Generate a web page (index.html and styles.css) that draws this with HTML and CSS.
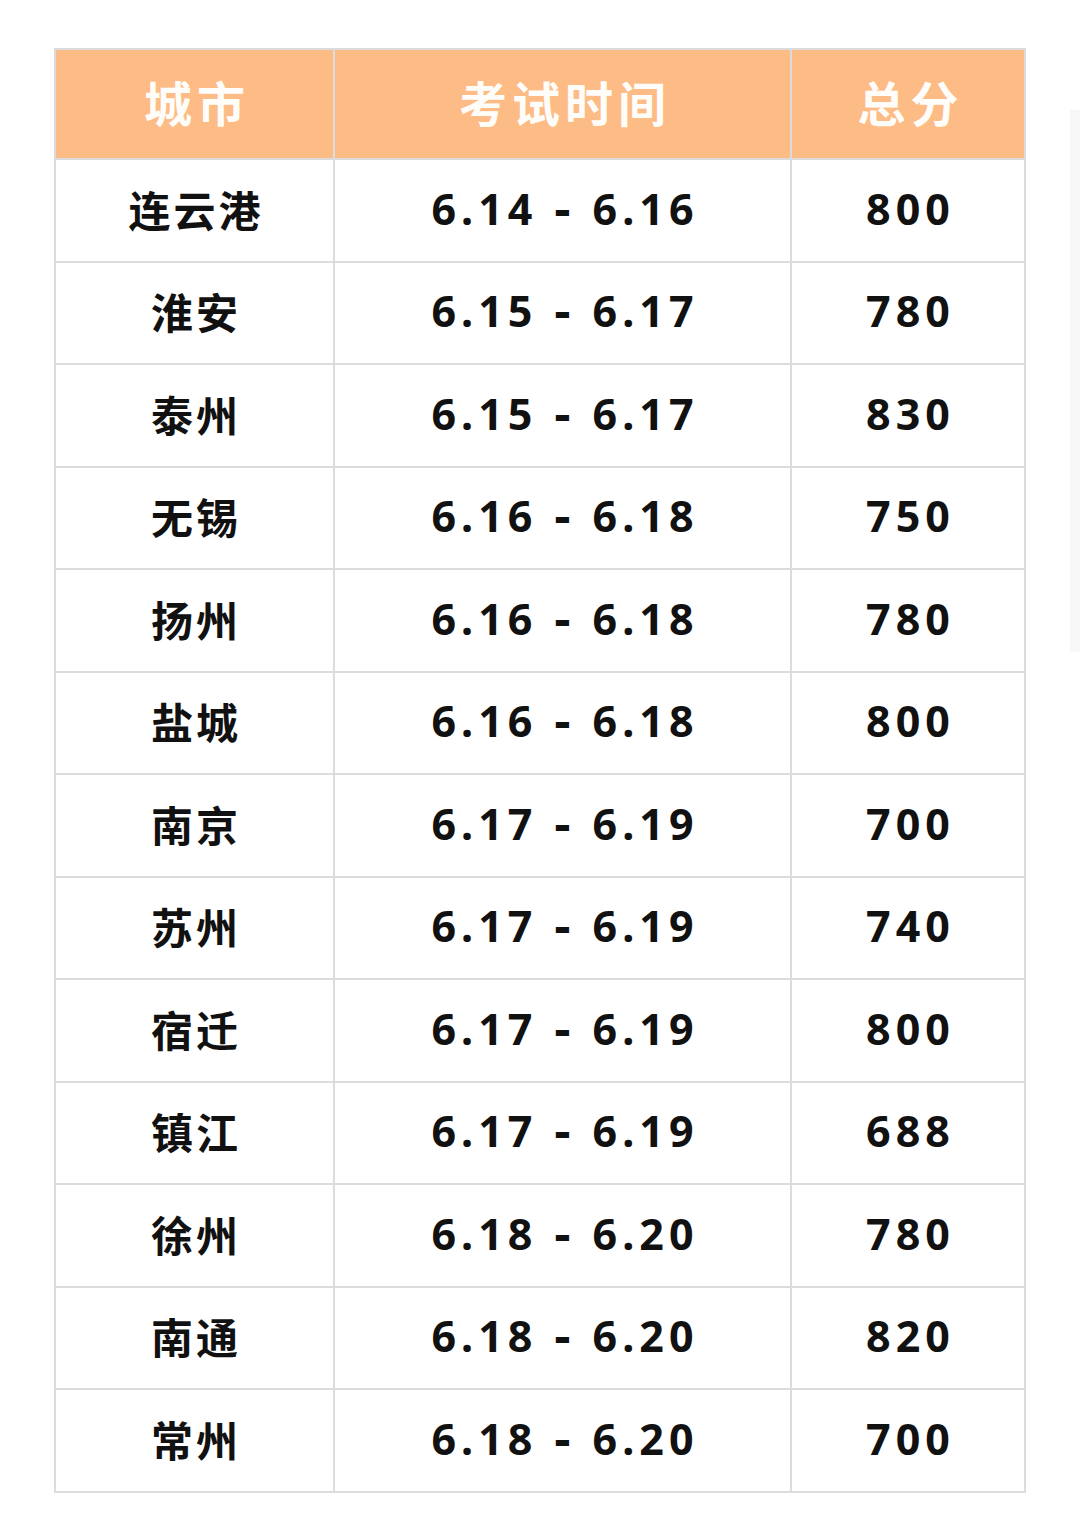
FILE: index.html
```html
<!DOCTYPE html>
<html lang="zh-CN">
<head>
<meta charset="utf-8">
<title>考试时间</title>
<link rel="stylesheet" href="styles.css">
</head>
<body>
<div class="page">
  <table class="exam">
    <colgroup>
      <col class="c-city">
      <col class="c-time">
      <col class="c-score">
    </colgroup>
    <thead>
      <tr><th>城市</th><th>考试时间</th><th>总分</th></tr>
    </thead>
    <tbody>
      <tr><td class="city">连云港</td><td class="num">6.14 <span class="dash">-</span> 6.16</td><td class="num">800</td></tr>
      <tr><td class="city">淮安</td><td class="num">6.15 <span class="dash">-</span> 6.17</td><td class="num">780</td></tr>
      <tr><td class="city">泰州</td><td class="num">6.15 <span class="dash">-</span> 6.17</td><td class="num">830</td></tr>
      <tr><td class="city">无锡</td><td class="num">6.16 <span class="dash">-</span> 6.18</td><td class="num">750</td></tr>
      <tr><td class="city">扬州</td><td class="num">6.16 <span class="dash">-</span> 6.18</td><td class="num">780</td></tr>
      <tr><td class="city">盐城</td><td class="num">6.16 <span class="dash">-</span> 6.18</td><td class="num">800</td></tr>
      <tr><td class="city">南京</td><td class="num">6.17 <span class="dash">-</span> 6.19</td><td class="num">700</td></tr>
      <tr><td class="city">苏州</td><td class="num">6.17 <span class="dash">-</span> 6.19</td><td class="num">740</td></tr>
      <tr><td class="city">宿迁</td><td class="num">6.17 <span class="dash">-</span> 6.19</td><td class="num">800</td></tr>
      <tr><td class="city">镇江</td><td class="num">6.17 <span class="dash">-</span> 6.19</td><td class="num">688</td></tr>
      <tr><td class="city">徐州</td><td class="num">6.18 <span class="dash">-</span> 6.20</td><td class="num">780</td></tr>
      <tr><td class="city">南通</td><td class="num">6.18 <span class="dash">-</span> 6.20</td><td class="num">820</td></tr>
      <tr><td class="city">常州</td><td class="num">6.18 <span class="dash">-</span> 6.20</td><td class="num">700</td></tr>
    </tbody>
  </table>
  <div class="edge-shade"></div>
</div>
</body>
</html>
```

FILE: styles.css
```css
html, body {
  margin: 0;
  padding: 0;
  background: #ffffff;
}

.page {
  position: relative;
  width: 1080px;
  height: 1539px;
  padding: 48px 0 0 54px;
  box-sizing: border-box;
  font-family: "Noto Sans", "Noto Sans CJK SC", sans-serif;
}

.exam {
  border-collapse: collapse;
  table-layout: fixed;
  width: 970px;
}

.c-city { width: 279px; }
.c-time { width: 457px; }
.c-score { width: 234px; }

.exam th,
.exam td {
  border: 2px solid #dcdcdc;
  text-align: center;
  vertical-align: middle;
  padding: 0;
}

.exam th {
  height: 102px;
  padding-bottom: 6px;
  background: #fdbb85;
  color: #fffdf9;
  font-family: "Noto Sans CJK SC", sans-serif;
  font-weight: 700;
  font-size: 48px;
  letter-spacing: 5px;
  text-indent: 5px;
}

.exam td {
  height: 96.5px;
  padding-bottom: 4px;
  color: #111111;
  font-weight: 700;
}

.city {
  font-family: "Noto Sans CJK SC", sans-serif;
  font-size: 42px;
  letter-spacing: 3px;
  text-indent: 3px;
}

.num {
  font-family: "Noto Sans", "Noto Sans CJK SC", sans-serif;
  font-size: 43px;
  letter-spacing: 5px;
  text-indent: 5px;
}

.dash {
  font-family: "DejaVu Sans", sans-serif;
  font-weight: 700;
}

.edge-shade {
  position: absolute;
  left: 1070px;
  top: 110px;
  width: 10px;
  height: 542px;
  background: #f8f8f8;
}
```
